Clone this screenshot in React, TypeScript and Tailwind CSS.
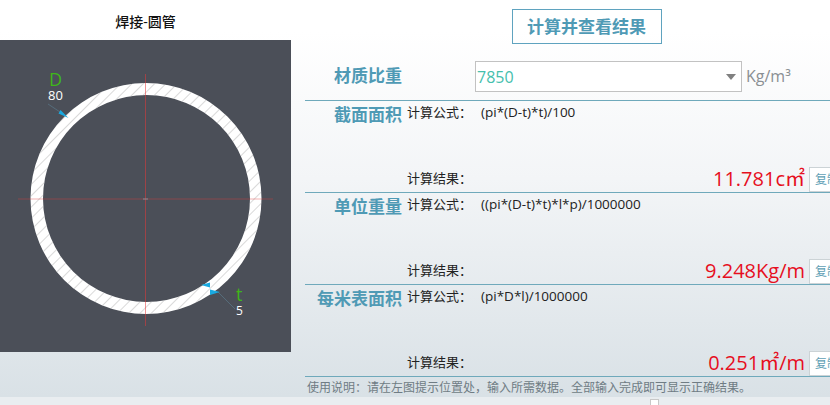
import React from 'react';

const FONT = 'font-["Open_Sans","Noto_Sans_CJK_SC",sans-serif]';

const ROWS = [
  { label: '截面面积', formula: '(pi*(D-t)*t)/100', value: '11.781c㎡' },
  { label: '单位重量', formula: '((pi*(D-t)*t)*l*p)/1000000', value: '9.248Kg/m' },
  { label: '每米表面积', formula: '(pi*D*l)/1000000', value: '0.251㎡/m' }
];

function PipeDrawing() {
  return (
    <svg width="291" height="312" viewBox="0 40 291 312" className="block">
      <defs>
        <pattern id="hatch" width="8" height="8" patternUnits="userSpaceOnUse" patternTransform="rotate(45)">
          <line x1="0" y1="0" x2="0" y2="8" stroke="#b4b4b4" strokeWidth="1" />
        </pattern>
      </defs>
      <path
        d="M30.5 198.5a115.5 115.5 0 1 0 231 0a115.5 115.5 0 1 0 -231 0zM43 198.5a103.5 103.5 0 1 1 207 0a103.5 103.5 0 1 1 -207 0z"
        fill="#ffffff"
      />
      <path
        d="M30.5 198.5a115.5 115.5 0 1 0 231 0a115.5 115.5 0 1 0 -231 0zM43 198.5a103.5 103.5 0 1 1 207 0a103.5 103.5 0 1 1 -207 0z"
        fill="url(#hatch)"
      />
      {/* centre lines */}
      <line x1="145.5" y1="74" x2="145.5" y2="326" stroke="#e23b3b" strokeOpacity="0.55" strokeWidth="1" />
      <line x1="18" y1="199" x2="273" y2="199" stroke="#e23b3b" strokeOpacity="0.4" strokeWidth="1" />
      <line x1="143" y1="199" x2="148" y2="199" stroke="#8a8f98" strokeWidth="1" />
      {/* leaders */}
      <line x1="48" y1="104" x2="60" y2="112" stroke="#5d7f92" strokeWidth="0.6" />
      <line x1="218" y1="292" x2="235" y2="309" stroke="#5d7f92" strokeWidth="0.6" />
      <polygon points="60.5,110 58.5,113.5 68.5,118" fill="#19a9e0" />
      <polygon points="201,285 210,282.5 210,287.5" fill="#19a9e0" />
      <polygon points="210,289.5 210,295 220,292" fill="#19a9e0" />
    </svg>
  );
}

function ResultRow({ label, formula, value }: { label: string; formula: string; value: string }) {
  return (
    <div className="flex h-[92px] border-t border-[#6fa9bb]">
      <div className="w-[97px] shrink-0 pt-[2px] text-right text-[17px] leading-[24px] font-bold text-[#4f9ab5]">{label}</div>
      <div className="flex min-w-0 flex-1 flex-col justify-between pl-[5px]">
        <div className="flex pt-[1px] text-[13px] leading-[20px] text-[#222]">
          <span className="w-[74px] shrink-0">计算公式：</span>
          <span className="text-[13.5px]">{formula}</span>
        </div>
        <div className="flex items-end">
          <span className="mb-[5px] text-[13px] leading-[18px] text-[#222]">计算结果：</span>
          <span className="mr-[4px] mb-[1px] ml-auto text-[20px] leading-[24px] text-[#e60f1e]">{value}</span>
          <button className="mr-[-20px] h-[25px] w-[41px] shrink-0 border border-[#ccd3d6] bg-white pl-[5px] text-left text-[12px] whitespace-nowrap text-[#5f9fb5]">
            复制
          </button>
        </div>
      </div>
    </div>
  );
}

export default function App() {
  return (
    <div className={`relative flex h-[405px] w-[830px] flex-col overflow-hidden ${FONT}`}>
      <div className="flex h-[397px] bg-gradient-to-b from-white from-[8%] via-[#f3f5f7] via-[45%] to-[#d9e1e6]">
        {/* left drawing */}
        <div className="w-[291px] shrink-0">
          <div className="flex h-[40px] items-center justify-center pt-[2px] text-[14px] font-medium text-[#111]">焊接-圆管</div>
          <div className="relative h-[312px] bg-[#4b4f58]">
            <PipeDrawing />
            <span className="absolute top-[31px] left-[49px] text-[18px] leading-[17px] text-[#3fb618]">D</span>
            <span className="absolute top-[48px] left-[48px] text-[13px] leading-[15px] text-white">80</span>
            <span className="absolute top-[246px] left-[236px] text-[18px] leading-[17px] text-[#3fb618]">t</span>
            <span className="absolute top-[263px] left-[236px] text-[12px] leading-[15px] text-white">5</span>
          </div>
        </div>

        {/* right results */}
        <div className="ml-[14px] flex min-w-0 flex-1 flex-col">
          <div className="flex justify-center pt-[9px] pl-[38px]">
            <div className="flex h-[35px] w-[150px] items-center justify-center border border-[#5fa3bf] text-[17px] font-bold text-[#4f9ab5]">
              计算并查看结果
            </div>
          </div>
          <div className="mt-[17px] flex h-[31px] items-center">
            <div className="mb-[1px] w-[97px] shrink-0 text-right text-[17px] font-bold text-[#4f9ab5]">材质比重</div>
            <div className="ml-[73px] flex h-[31px] w-[267px] items-center justify-between border border-[#c2c2c2] bg-white pr-[5px] pl-[1px] text-[16px] text-[#45c0ad]">
              <span>7850</span>
              <span className="h-0 w-0 border-x-[5px] border-t-[6px] border-x-transparent border-t-[#808080]" />
            </div>
            <span className="mb-[2px] ml-[4px] text-[16px] text-[#8a8f93]">Kg/m³</span>
          </div>
          <div className="mt-[8px]">
            {ROWS.map(row => (
              <ResultRow key={row.label} {...row} />
            ))}
          </div>
          <div className="flex-1 border-t border-[#6fa9bb] pt-[2px] pl-[2px] text-[12px] leading-[18px] text-[#6f7c84]">
            使用说明：请在左图提示位置处，输入所需数据。全部输入完成即可显示正确结果。
          </div>
        </div>
      </div>
      <div className="flex-1 bg-[#e9edf0]" />
      <span className="absolute top-[399px] left-[650px] h-[7px] w-[9px] border border-[#c8c8c8] bg-white" />
    </div>
  );
}
